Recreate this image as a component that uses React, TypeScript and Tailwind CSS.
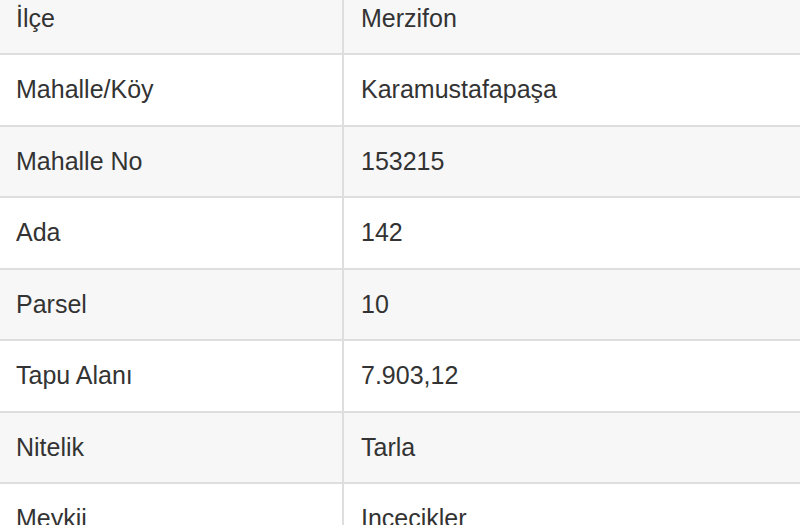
const rows: [string, string][] = [
  ["İlçe", "Merzifon"],
  ["Mahalle/Köy", "Karamustafapaşa"],
  ["Mahalle No", "153215"],
  ["Ada", "142"],
  ["Parsel", "10"],
  ["Tapu Alanı", "7.903,12"],
  ["Nitelik", "Tarla"],
  ["Meykii", "Incecikler"],
];

export default function App() {
  return (
    <div className="h-[525px] w-[800px] overflow-hidden bg-white font-['Liberation_Sans',Arial,sans-serif] text-[25px] text-[#333]">
      <div className="-mt-[16.5px]">
        {rows.map(([label, value], i) => (
          <div
            key={label}
            className={`flex h-[71.5px] border-b-2 border-[#dedede] ${
              i % 2 === 0 ? "bg-[#f7f7f7]" : "bg-white"
            }`}
          >
            <div className="flex w-[344px] shrink-0 items-center border-r-2 border-[#dedede] pl-4">
              {label}
            </div>
            <div className="flex flex-1 items-center pl-[17px]">{value}</div>
          </div>
        ))}
      </div>
    </div>
  );
}
